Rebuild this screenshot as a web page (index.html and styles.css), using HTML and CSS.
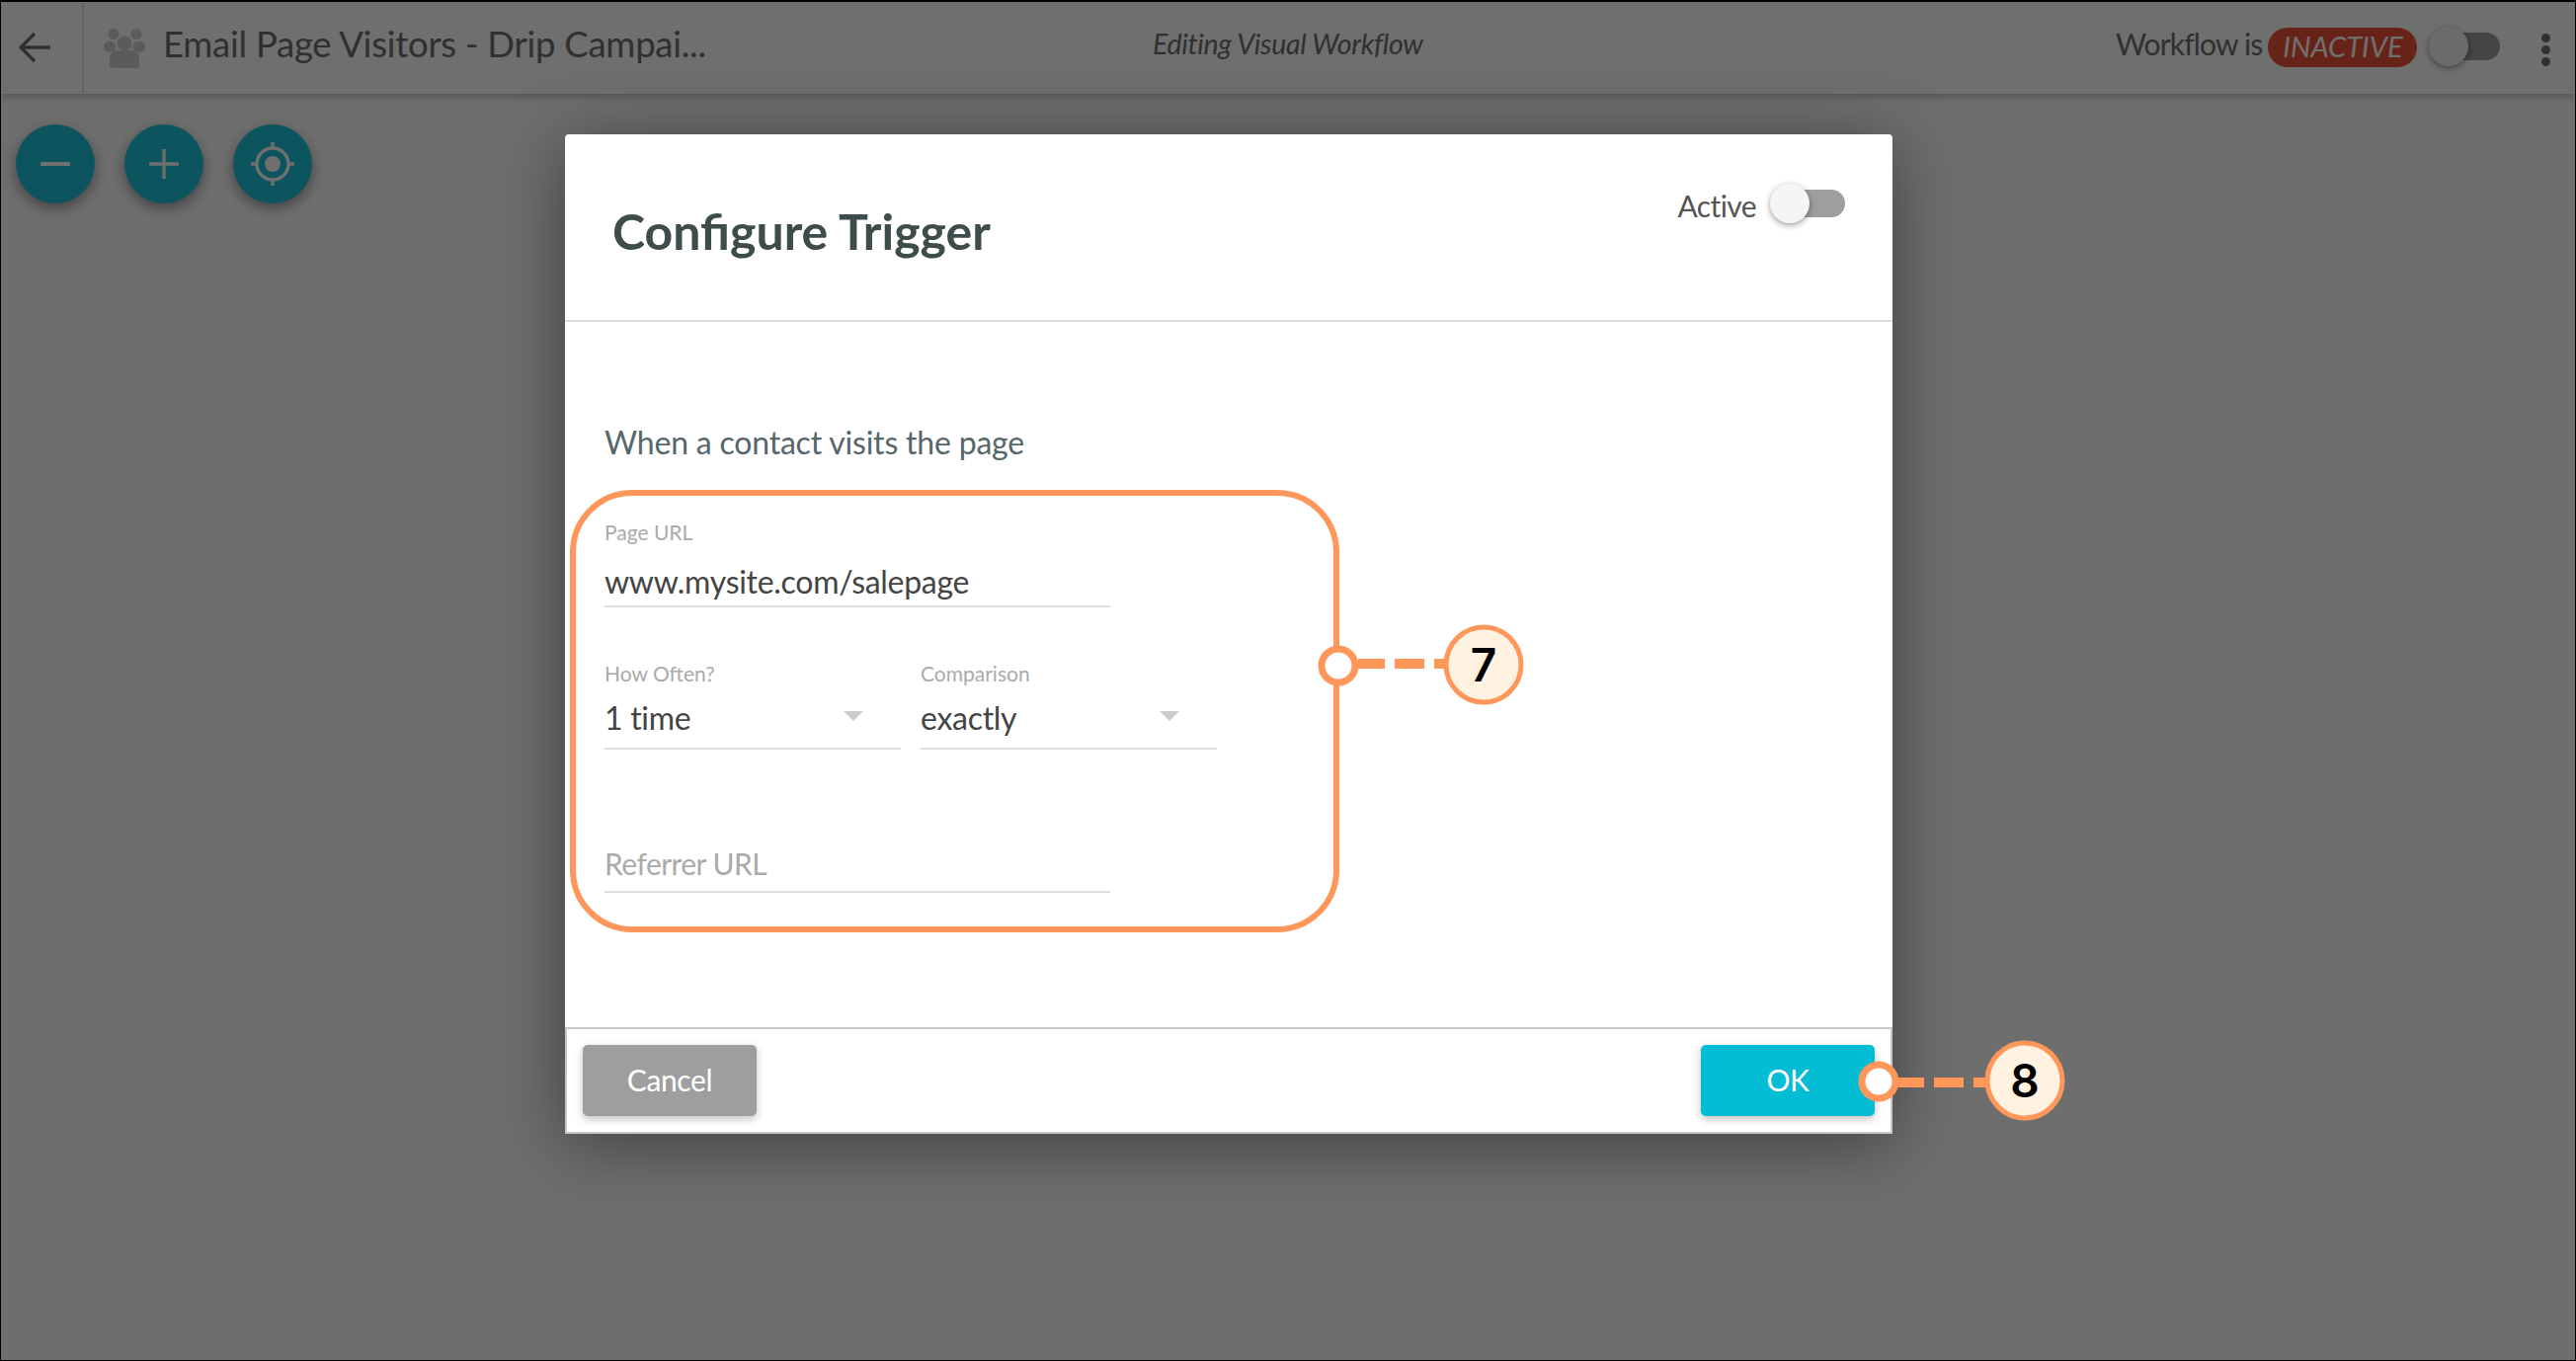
FILE: index.html
```html
<!DOCTYPE html>
<html lang="en">
<head>
<meta charset="utf-8">
<title>Configure Trigger</title>
<link rel="stylesheet" href="styles.css">
</head>
<body>
<div class="app">
  <header class="topbar">
    <button class="back" aria-label="Back">
      <svg width="34" height="32" viewBox="0 0 34 32"><path d="M33 16H3M17 2 3 16l14 14" fill="none" stroke="currentColor" stroke-width="3.4"/></svg>
    </button>
    <div class="wf-title">
      <svg class="people" width="42" height="40" viewBox="0 0 42 40"><g fill="currentColor"><circle cx="10" cy="5.5" r="5.5"/><circle cx="33" cy="5.5" r="5.5"/><circle cx="21" cy="15" r="7.5"/><rect x="0" y="13" width="12" height="11" rx="5"/><rect x="30" y="13" width="12" height="11" rx="5"/><path d="M6 31q0-9 9-9h12q9 0 9 9v6q0 3-3 3H9q-3 0-3-3z"/></g></svg>
      <span class="wf-name">Email Page Visitors - Drip Campai...</span>
    </div>
    <div class="wf-mode">Editing Visual Workflow</div>
    <div class="wf-status">
      <span class="wf-label">Workflow is</span>
      <span class="pill">INACTIVE</span>
      <span class="switch switch-top"><i class="track"></i><i class="thumb"></i></span>
      <span class="dots"><i></i><i></i><i></i></span>
    </div>
  </header>
  <div class="fabs">
    <button class="fab" aria-label="Zoom out"><svg width="30" height="30" viewBox="0 0 30 30"><rect y="13" width="30" height="4" fill="currentColor"/></svg></button>
    <button class="fab" aria-label="Zoom in"><svg width="30" height="30" viewBox="0 0 30 30"><path d="M15 0v30M0 15h30" stroke="currentColor" stroke-width="3.4"/></svg></button>
    <button class="fab" aria-label="Center"><svg width="44" height="44" viewBox="0 0 44 44"><circle cx="22" cy="22" r="16" fill="none" stroke="currentColor" stroke-width="3.4"/><circle cx="22" cy="22" r="8" fill="currentColor"/><path d="M22 0v6M22 38v6M0 22h6M38 22h6" stroke="currentColor" stroke-width="3.4"/></svg></button>
  </div>
</div>

<div class="overlay">
  <section class="modal">
    <div class="modal-head">
      <h1>Configure Trigger</h1>
      <div class="active-row">
        <span class="active-label">Active</span>
        <span class="switch switch-modal"><i class="track"></i><i class="thumb"></i></span>
      </div>
    </div>
    <div class="modal-body">
      <p class="intro">When a contact visits the page</p>
      <div class="field field-wide field-first">
        <label>Page URL</label>
        <div class="value">www.mysite.com/salepage</div>
      </div>
      <div class="select-row">
        <div class="field field-select">
          <label>How Often?</label>
          <div class="value">1 time<i class="caret"></i></div>
        </div>
        <div class="field field-select">
          <label>Comparison</label>
          <div class="value">exactly<i class="caret"></i></div>
        </div>
      </div>
      <div class="field field-wide field-empty">
        <div class="value placeholder">Referrer URL</div>
      </div>
    </div>
    <div class="modal-foot">
      <button class="btn btn-cancel">Cancel</button>
      <button class="btn btn-ok">OK</button>
    </div>
  </section>
</div>

<svg class="callouts" width="2608" height="1378" viewBox="0 0 2608 1378">
  <rect class="co-line" x="580" y="499" width="773" height="442" rx="60"/>
  <path class="co-dash" d="M1375 672h27M1412 672h30M1452 672h14"/>
  <circle class="co-dot" cx="1355" cy="674" r="17"/>
  <circle class="co-badge" cx="1502" cy="673" r="38"/>
  <text class="co-num" x="1502" y="690">7</text>
  <path class="co-dash" d="M1920 1096h28M1958 1096h30M1998 1096h14"/>
  <circle class="co-dot" cx="1902" cy="1095" r="17"/>
  <circle class="co-badge" cx="2050" cy="1094" r="38"/>
  <text class="co-num" x="2050" y="1111">8</text>
</svg>
</body>
</html>
```

FILE: styles.css
```css
* { box-sizing: border-box; }
html, body { margin: 0; height: 100%; }
body {
  width: 2608px;
  height: 1378px;
  position: relative;
  overflow: hidden;
  font-family: Lato, "Open Sans", sans-serif;
  background: #fff;
}
i { display: block; font-style: normal; }
button { font-family: inherit; border: 0; padding: 0; cursor: pointer; }

.app {
  height: 100%;
  border-top: 2px solid #000;
  border-left: 1px solid #000;
  border-right: 1px solid #000;
  border-bottom: 1px solid #000;
  background: #fcfcfc;
}

/* top bar */
.topbar {
  height: 93px;
  display: flex;
  align-items: center;
  background: #fff;
  box-shadow: 0 2px 8px rgba(0,0,0,.28);
  color: #6e6e6e;
  position: relative;
}
.back {
  width: 84px;
  height: 91px;
  display: flex;
  align-items: center;
  padding: 0 0 2px 17px;
  background: none;
  border-right: 2px solid #e6e6e6;
  color: #6e6e6e;
}
.wf-title {
  width: 1082px;
  display: flex;
  align-items: center;
  gap: 18px;
  padding-left: 20px;
}
.people { color: #d0d0d0; flex: none; }
.wf-name { font-size: 36.5px; letter-spacing: -.25px; white-space: nowrap; margin-bottom: 9px; }
.wf-mode { font-size: 28.5px; font-style: italic; letter-spacing: -.3px; width: 975px; white-space: nowrap; margin-bottom: 9px; }
.wf-status {
  display: flex;
  align-items: center;
  font-size: 30px;
}
.wf-label { letter-spacing: -.85px; margin-bottom: 9px; }
.pill {
  margin-left: 6px;
  width: 151px;
  height: 40px;
  border-radius: 20px;
  background: #ef5238;
  color: #fff;
  font-style: italic;
  font-size: 29px;
  line-height: 37px;
  text-align: center;
  margin-bottom: 1px;
}
.switch { position: relative; display: block; width: 72px; height: 40px; }
.track {
  position: absolute;
  left: 16px; right: 0; top: 6px; bottom: 6px;
  border-radius: 0 14px 14px 0;
  background: #9e9e9e;
}
.thumb {
  position: absolute;
  left: 0; top: 0;
  width: 40px; height: 40px;
  border-radius: 50%;
  background: #f5f5f5;
  box-shadow: 0 2px 6px rgba(0,0,0,.4);
}
.switch-top { margin-left: 12px; margin-bottom: 4px; }
.switch-modal { width: 76px; }
.dots { margin-left: 42px; margin-top: 4px; display: flex; flex-direction: column; gap: 3px; }
.dots i { width: 9px; height: 9px; border-radius: 50%; background: #6e6e6e; }

/* zoom buttons */
.fabs { display: flex; gap: 30px; padding: 31px 0 0 15px; }
.fab {
  width: 80px; height: 80px;
  border-radius: 50%;
  background: #1cc3d9;
  color: #fff;
  display: flex; align-items: center; justify-content: center;
  box-shadow: 0 5px 14px rgba(0,0,0,.4);
}

/* dim */
.overlay {
  position: absolute;
  inset: 2px 1px 1px 1px;
  background: rgba(0,0,0,.565);
}
.modal {
  position: absolute;
  left: 571px;
  top: 134px;
  width: 1344px;
  height: 1012px;
  background: #fff;
  border-radius: 4px 4px 0 0;
  display: flex;
  flex-direction: column;
  box-shadow: 0 10px 70px rgba(0,0,0,.42);
}
.modal-head {
  height: 190px;
  flex: none;
  border-bottom: 2px solid #ddd;
  display: flex;
  justify-content: space-between;
  padding: 50px 48px 0 48px;
}
.modal-head h1 {
  margin: 18px 0 0;
  font-size: 50px;
  line-height: 60px;
  font-weight: 700;
  color: #3e4c4c;
}
.active-row {
  display: flex;
  align-items: flex-start;
  font-size: 30px;
  color: #555;
  gap: 14px;
}
.active-label { line-height: 44px; letter-spacing: -.6px; }
.modal-body { flex: 1; padding: 0 40px; }
.intro {
  margin: 100px 0 0;
  font-size: 32px;
  line-height: 44px;
  letter-spacing: -.2px;
  color: #56666a;
}
.field { border-bottom: 2px solid #ddd; position: relative; }
.field label { display: block; font-size: 21px; line-height: 26px; color: #aaa; }
.field .value { font-size: 32px; line-height: 44px; letter-spacing: -.29px; color: #444; }
.field-wide { width: 512px; }
.field-first { margin-top: 56px; }
.field-wide .value { margin-top: 15px; padding-bottom: 2px; }
.select-row { display: flex; gap: 20px; margin-top: 54px; }
.field-select { width: 300px; }
.field-select .value { margin-top: 10px; padding-bottom: 8px; position: relative; }
.caret {
  position: absolute;
  right: 38px; top: 15px;
  width: 0; height: 0;
  border-left: 10px solid transparent;
  border-right: 10px solid transparent;
  border-top: 10px solid #ccc;
}
.field-empty { margin-top: 93px; }
.field-empty .value { margin: 0; padding-bottom: 6px; }
.placeholder.value { color: #aaa; font-size: 30px; letter-spacing: -.55px; }

.modal-foot {
  height: 108px;
  flex: none;
  border: 2px solid #c8c8c8;
  background: #fff;
  display: flex;
  justify-content: space-between;
  align-items: flex-start;
  padding: 16px 16px 0;
}
.btn {
  height: 72px;
  width: 176px;
  border-radius: 5px;
  color: #fff;
  font-size: 30px;
  padding-bottom: 2px;
  letter-spacing: -.4px;
  box-shadow: 0 3px 8px rgba(0,0,0,.25);
}
.btn-cancel { background: #9e9e9e; }
.btn-ok { background: #04bcd4; }

/* annotations */
.callouts { position: absolute; left: 0; top: 0; }
.co-line { fill: none; stroke: #ff965a; stroke-width: 6; }
.co-dash { fill: none; stroke: #ff965a; stroke-width: 10; }
.co-dot { fill: #fff; stroke: #ff965a; stroke-width: 7; }
.co-badge { fill: #fff2e1; stroke: #ff965a; stroke-width: 5; }
.co-num { font-family: Inter, Lato, sans-serif; font-weight: 600; font-size: 46px; fill: #000; text-anchor: middle; }
```
